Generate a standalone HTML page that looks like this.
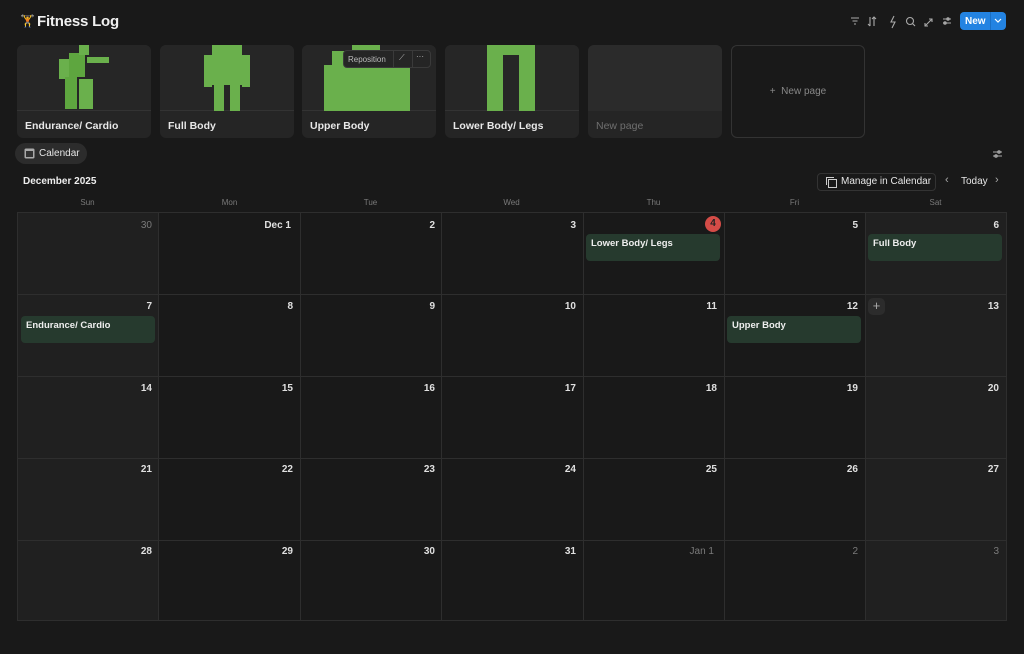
<!DOCTYPE html>
<html><head><meta charset="utf-8"><style>
*{box-sizing:border-box;margin:0;padding:0}
body{width:1024px;height:654px;background:#191919;font-family:"Liberation Sans",sans-serif;color:#e6e6e6;position:relative;overflow:hidden;line-height:1.2}
.abs{position:absolute}
.card{position:absolute;top:45px;width:134px;height:93px;background:#252525;border-radius:6px;overflow:hidden}
.card .img{position:absolute;left:0;top:0;width:100%;height:66px;background:#262626;border-bottom:1px solid #333}
.card .t{position:absolute;left:8px;top:75px;font-size:10.5px;font-weight:bold;color:#e8e8e8}
.grid{position:absolute;left:17px;top:212px;width:990px;height:409px;border:1px solid #2e2e2e}
.col{position:absolute;top:0;height:100%;width:141.4px;border-right:1px solid #2e2e2e}
.row{position:absolute;left:0;width:100%;border-top:1px solid #2e2e2e}
.d{position:absolute;font-size:10px;font-weight:bold;color:#e0e0e0;text-align:right;width:30px;margin-top:1px}
.d.g{color:#7a7a7a;font-weight:normal}
.wd{position:absolute;top:198px;font-size:8px;color:#7a7a7a;width:141px;text-align:center}
.ev{position:absolute;height:27px;width:134px;background:#263a2e;border-radius:4px;font-size:9.5px;font-weight:bold;color:#eee;padding:4px 5px}
.px{position:absolute;background:#6ab04c}
</style></head><body>
<div class="abs" style="left:20px;top:14px;font-size:12px">🏋</div>
<div class="abs" style="left:37px;top:13px;font-size:15px;font-weight:bold;color:#f0f0f0;letter-spacing:-0.2px">Fitness Log</div>
<svg class="abs" style="left:849px;top:15px" width="110" height="14" fill="none" stroke="#aaa" stroke-width="1.1">
<path d="M2 3h8M3.5 6h5M5 9h2"/>
<path d="M21 2v9M19 9l2 2M25 11V2M23 4l2-2 2 2"/>
<path d="M45 1l-3 6h4l-3 6"/>
<circle cx="61" cy="6" r="3.5"/><path d="M63.5 8.5l2.5 2.5"/>
<path d="M76 11l7-7M76 8v3h3M83 7V4h-3"/>
<path d="M94 4h8M94 8h8"/><circle cx="99" cy="4" r="1.2"/><circle cx="96" cy="8" r="1.2"/>
</svg>
<div class="abs" style="left:960px;top:12px;width:46px;height:18px;background:#2383e2;border-radius:4px"></div>
<div class="abs" style="left:965px;top:16px;font-size:10px;font-weight:bold;color:#fff">New</div>
<div class="abs" style="left:990px;top:12px;width:1px;height:18px;background:#1a6fc4"></div>
<svg class="abs" style="left:994px;top:18px" width="8" height="6"><path d="M1 1l3 3 3-3" stroke="#fff" fill="none" stroke-width="1.2"/></svg>

<div class="card" style="left:17px"><div class="img">
<div class="px" style="left:52px;top:8px;width:16px;height:24px;background:#5ea63f"></div>
<div class="px" style="left:62px;top:0;width:10px;height:10px"></div>
<div class="px" style="left:42px;top:14px;width:10px;height:20px"></div>
<div class="px" style="left:70px;top:12px;width:22px;height:6px"></div>
<div class="px" style="left:48px;top:32px;width:12px;height:32px;background:#5ea63f"></div>
<div class="px" style="left:62px;top:34px;width:14px;height:30px"></div>
</div><div class="t">Endurance/ Cardio</div></div>
<div class="card" style="left:160px"><div class="img">
<div class="px" style="left:52px;top:0;width:30px;height:40px"></div>
<div class="px" style="left:44px;top:10px;width:8px;height:32px"></div>
<div class="px" style="left:82px;top:10px;width:8px;height:32px"></div>
<div class="px" style="left:54px;top:40px;width:10px;height:26px"></div>
<div class="px" style="left:70px;top:40px;width:10px;height:26px"></div>
</div><div class="t">Full Body</div></div>
<div class="card" style="left:302px"><div class="img">
<div class="px" style="left:50px;top:0;width:28px;height:6px"></div>
<div class="px" style="left:30px;top:6px;width:70px;height:60px"></div>
<div class="px" style="left:22px;top:20px;width:12px;height:46px"></div>
<div class="px" style="left:96px;top:20px;width:12px;height:46px"></div>
</div><div class="t">Upper Body</div>
<div class="abs" style="left:41px;top:5px;width:88px;height:18px;background:#252525;border:1px solid #3a3a3a;border-radius:4px;font-size:8px;color:#bbb;padding:4px 4px">Reposition<span style="position:absolute;left:49px;top:0;height:16px;border-left:1px solid #3a3a3a"></span><span style="position:absolute;left:55px;top:2px">⟋</span><span style="position:absolute;left:68px;top:0;height:16px;border-left:1px solid #3a3a3a"></span><span style="position:absolute;left:72px;top:1px">···</span></div>
</div>
<div class="card" style="left:445px"><div class="img">
<div class="px" style="left:42px;top:0;width:48px;height:10px"></div>
<div class="px" style="left:42px;top:8px;width:16px;height:58px"></div>
<div class="px" style="left:74px;top:8px;width:16px;height:58px"></div>
</div><div class="t">Lower Body/ Legs</div></div>
<div class="card" style="left:588px"><div class="img" style="background:#2b2b2b;border-bottom:none"></div><div class="t" style="color:#6f6f6f;font-weight:normal">New page</div></div>
<div class="abs" style="left:731px;top:45px;width:134px;height:93px;border:1px solid #333;border-radius:6px;font-size:10px;color:#888;text-align:center;padding-top:40px">+&nbsp; New page</div>

<div class="abs" style="left:15px;top:143px;width:72px;height:21px;background:#2c2c2c;border-radius:11px"></div>
<svg class="abs" style="left:24px;top:148px" width="11" height="11"><rect x="0.5" y="0.5" width="10" height="10" rx="1.5" fill="#aaa"/><rect x="2" y="3" width="7" height="6" fill="#333"/></svg>
<div class="abs" style="left:39px;top:148px;font-size:10px;color:#e6e6e6">Calendar</div>
<svg class="abs" style="left:992px;top:149px" width="11" height="10" stroke="#aaa" fill="none"><path d="M1 3h9M1 7h9"/><circle cx="7" cy="3" r="1.3"/><circle cx="4" cy="7" r="1.3"/></svg>

<div class="abs" style="left:23px;top:176px;font-size:10px;font-weight:bold;color:#eee">December 2025</div>
<div class="abs" style="left:817px;top:173px;width:119px;height:18px;border:1px solid #333;border-radius:4px"></div>
<svg class="abs" style="left:826px;top:177px" width="11" height="11" stroke="#ccc" fill="none"><rect x="2.5" y="2.5" width="8" height="8"/><path d="M0.5 8V0.5H8"/></svg>
<div class="abs" style="left:841px;top:176px;font-size:10px;color:#e6e6e6">Manage in Calendar</div>
<div class="abs" style="left:945px;top:174px;font-size:11px;color:#aaa">‹</div>
<div class="abs" style="left:961px;top:176px;font-size:10px;color:#e6e6e6">Today</div>
<div class="abs" style="left:995px;top:174px;font-size:11px;color:#aaa">›</div>

<div class="wd" style="left:17px">Sun</div><div class="wd" style="left:159px">Mon</div><div class="wd" style="left:300px">Tue</div><div class="wd" style="left:441px">Wed</div><div class="wd" style="left:583px">Thu</div><div class="wd" style="left:724px">Fri</div><div class="wd" style="left:865px">Sat</div>

<div class="grid">
<div class="col" style="left:0;background:#202020"></div>
<div class="col" style="left:141.4px"></div>
<div class="col" style="left:282.8px"></div>
<div class="col" style="left:424.2px"></div>
<div class="col" style="left:565.6px"></div>
<div class="col" style="left:707px"></div>
<div class="col" style="left:848.4px;background:#202020;border-right:none;width:140px"></div>
<div class="row" style="top:81px"></div><div class="row" style="top:163px"></div><div class="row" style="top:245px"></div><div class="row" style="top:327px"></div>
</div>

<div class="d g" style="left:122px;top:219px">30</div>
<div class="d" style="left:251px;top:219px;width:40px">Dec 1</div>
<div class="d" style="left:405px;top:219px">2</div>
<div class="d" style="left:546px;top:219px">3</div>
<div class="abs" style="left:705px;top:216px;width:16px;height:16px;border-radius:8px;background:#d44c47;font-size:10px;font-weight:bold;color:#222;text-align:center;line-height:16px">4</div>
<div class="d" style="left:828px;top:219px">5</div>
<div class="d" style="left:969px;top:219px">6</div>
<div class="ev" style="left:586px;top:234px">Lower Body/ Legs</div>
<div class="ev" style="left:868px;top:234px">Full Body</div>

<div class="d" style="left:122px;top:300px">7</div>
<div class="d" style="left:263px;top:300px">8</div>
<div class="d" style="left:405px;top:300px">9</div>
<div class="d" style="left:546px;top:300px">10</div>
<div class="d" style="left:687px;top:300px">11</div>
<div class="d" style="left:828px;top:300px">12</div>
<div class="d" style="left:969px;top:300px">13</div>
<div class="abs" style="left:868px;top:298px;width:17px;height:17px;border-radius:5px;background:#2c2c2c;color:#aaa;font-size:13px;text-align:center;line-height:16px">+</div>
<div class="ev" style="left:21px;top:316px">Endurance/ Cardio</div>
<div class="ev" style="left:727px;top:316px">Upper Body</div>

<div class="d" style="left:122px;top:382px">14</div><div class="d" style="left:263px;top:382px">15</div><div class="d" style="left:405px;top:382px">16</div><div class="d" style="left:546px;top:382px">17</div><div class="d" style="left:687px;top:382px">18</div><div class="d" style="left:828px;top:382px">19</div><div class="d" style="left:969px;top:382px">20</div>
<div class="d" style="left:122px;top:463px">21</div><div class="d" style="left:263px;top:463px">22</div><div class="d" style="left:405px;top:463px">23</div><div class="d" style="left:546px;top:463px">24</div><div class="d" style="left:687px;top:463px">25</div><div class="d" style="left:828px;top:463px">26</div><div class="d" style="left:969px;top:463px">27</div>
<div class="d" style="left:122px;top:545px">28</div><div class="d" style="left:263px;top:545px">29</div><div class="d" style="left:405px;top:545px">30</div><div class="d" style="left:546px;top:545px">31</div><div class="d g" style="left:667px;top:545px;width:47px">Jan 1</div><div class="d g" style="left:828px;top:545px">2</div><div class="d g" style="left:969px;top:545px">3</div>
</body></html>
